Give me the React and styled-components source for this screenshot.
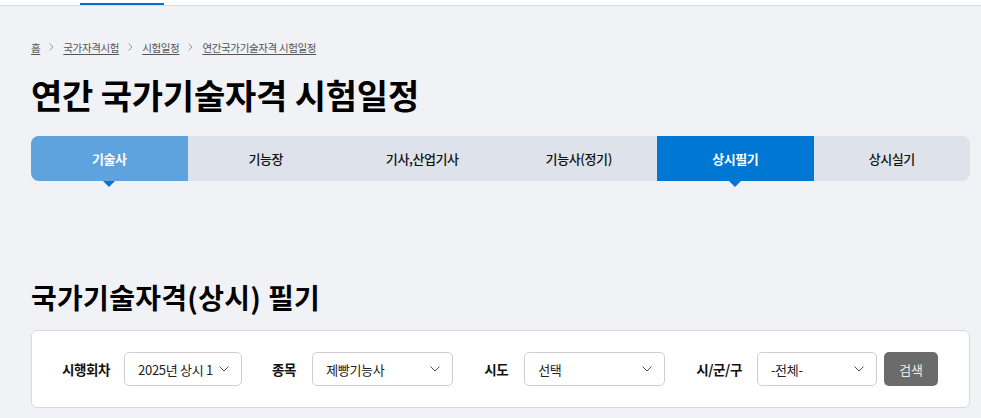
import React from "react";
import styled, { createGlobalStyle } from "styled-components";

const GlobalStyle = createGlobalStyle`
  html, body {
    margin: 0;
    padding: 0;
    background: #f1f2f6;
    font-family: "Noto Sans CJK KR", "Noto Sans", sans-serif;
    color: #111;
  }
  * { box-sizing: border-box; }
`;

const Header = styled.header`
  height: 6px;
  background: #fff;
  border-bottom: 1px solid #dcdde1;
  padding-left: 80px;
  display: flex;
`;

const HeaderTab = styled.div`
  width: 84px;
  height: 5px;
  border-bottom: 2px solid #0070d0;
`;

const Content = styled.main`
  width: 939px;
  margin-left: 31px;
  padding-top: 33px;
`;

const Breadcrumb = styled.nav`
  display: flex;
  align-items: center;
  gap: 9px;
  height: 16px;
  font-size: 10.5px;
  letter-spacing: -0.35px;
  color: #555;
`;

const Crumb = styled.a`
  color: #555;
  text-decoration: underline;
  text-underline-offset: 2px;
`;

const Sep = styled.span`
  display: flex;
  align-items: center;
`;

const PageTitle = styled.h1`
  margin: 20px 0 0;
  font-size: 34px;
  line-height: 40px;
  font-weight: 700;
  letter-spacing: -0.2px;
  color: #000;
`;

const TabList = styled.ul`
  list-style: none;
  margin: 21px 0 0;
  padding: 0;
  display: grid;
  grid-template-columns: repeat(6, 1fr);
  height: 45px;
  border-radius: 8px;
  background: #dee2ea;
`;

const Tab = styled.li`
  position: relative;
  display: flex;
  align-items: center;
  justify-content: center;
  font-size: 13px;
  font-weight: ${(p) => (p.$variant ? 700 : 500)};
  letter-spacing: -0.4px;
  color: ${(p) => (p.$variant ? "#fff" : "#111")};
  background: ${(p) =>
    p.$variant === "active" ? "#0077d2" : p.$variant === "light" ? "#5ea3dd" : "transparent"};
  &:first-child {
    border-radius: 8px 0 0 8px;
  }
  &:last-child {
    border-radius: 0 8px 8px 0;
  }
  &::after {
    content: "";
    display: ${(p) => (p.$variant ? "block" : "none")};
    position: absolute;
    left: 50%;
    bottom: -6px;
    margin-left: -6px;
    border-left: 6px solid transparent;
    border-right: 6px solid transparent;
    border-top: 6px solid #0a74d0;
  }
`;

const SectionTitle = styled.h2`
  margin: 100px 0 0;
  font-size: 28px;
  line-height: 32px;
  font-weight: 700;
  letter-spacing: 0.3px;
  color: #000;
`;

const SearchBox = styled.div`
  margin-top: 17px;
  background: #fff;
  border: 1px solid #d9d9dc;
  border-radius: 6px;
  padding: 21px 30px;
  display: flex;
  align-items: center;
`;

const Field = styled.div`
  display: flex;
  align-items: center;
  gap: ${(p) => p.$gap || 15}px;
  margin-right: ${(p) => p.$after || 30}px;
`;

const Label = styled.span`
  font-size: 13.5px;
  font-weight: 700;
  letter-spacing: -0.4px;
  color: #111;
  white-space: nowrap;
`;

const Select = styled.div`
  width: ${(p) => p.$w}px;
  height: 34px;
  border: 1px solid #cfcfd3;
  border-radius: 5px;
  background: #fff;
  display: flex;
  align-items: center;
  padding: 0 12px 0 13px;
  gap: 6px;
`;

const SelectText = styled.span`
  flex: 1;
  overflow: hidden;
  white-space: nowrap;
  font-size: 13px;
  letter-spacing: -0.3px;
  color: #222;
`;

const Button = styled.button`
  width: 54px;
  height: 34px;
  border: 0;
  border-radius: 5px;
  background: #6b6b6b;
  color: #ececec;
  font-family: inherit;
  font-size: 13px;
  letter-spacing: -0.3px;
`;

const Chevron = () => (
  <svg width="10" height="6" viewBox="0 0 10 6" fill="none">
    <polyline points="0.5,0.5 5,5 9.5,0.5" stroke="#555" strokeWidth="1" />
  </svg>
);

const CrumbArrow = () => (
  <svg width="5" height="8" viewBox="0 0 5 8" fill="none">
    <polyline points="0.5,0.5 4,4 0.5,7.5" stroke="#999" strokeWidth="1" />
  </svg>
);

const tabs = [
  { label: "기술사", variant: "light" },
  { label: "기능장" },
  { label: "기사,산업기사" },
  { label: "기능사(정기)" },
  { label: "상시필기", variant: "active" },
  { label: "상시실기" },
];

const crumbs = ["홈", "국가자격시험", "시험일정", "연간국가기술자격 시험일정"];

export default function App() {
  return (
    <>
      <GlobalStyle />
      <Header>
        <HeaderTab />
      </Header>
      <Content>
        <Breadcrumb>
          {crumbs.map((c, i) => (
            <React.Fragment key={c}>
              {i > 0 && (
                <Sep>
                  <CrumbArrow />
                </Sep>
              )}
              <Crumb>{c}</Crumb>
            </React.Fragment>
          ))}
        </Breadcrumb>
        <PageTitle>연간 국가기술자격 시험일정</PageTitle>
        <TabList>
          {tabs.map((t) => (
            <Tab key={t.label} $variant={t.variant}>
              {t.label}
            </Tab>
          ))}
        </TabList>
        <SectionTitle>국가기술자격(상시) 필기</SectionTitle>
        <SearchBox>
          <Field $gap={14}>
            <Label>시행회차</Label>
            <Select $w={118}>
              <SelectText>2025년 상시 1회</SelectText>
              <Chevron />
            </Select>
          </Field>
          <Field $gap={16} $after={31}>
            <Label>종목</Label>
            <Select $w={141}>
              <SelectText>제빵기능사</SelectText>
              <Chevron />
            </Select>
          </Field>
          <Field $gap={16} $after={31}>
            <Label>시도</Label>
            <Select $w={141}>
              <SelectText>선택</SelectText>
              <Chevron />
            </Select>
          </Field>
          <Field $gap={15} $after={7}>
            <Label>시/군/구</Label>
            <Select $w={120}>
              <SelectText>-전체-</SelectText>
              <Chevron />
            </Select>
          </Field>
          <Button>검색</Button>
        </SearchBox>
      </Content>
    </>
  );
}
